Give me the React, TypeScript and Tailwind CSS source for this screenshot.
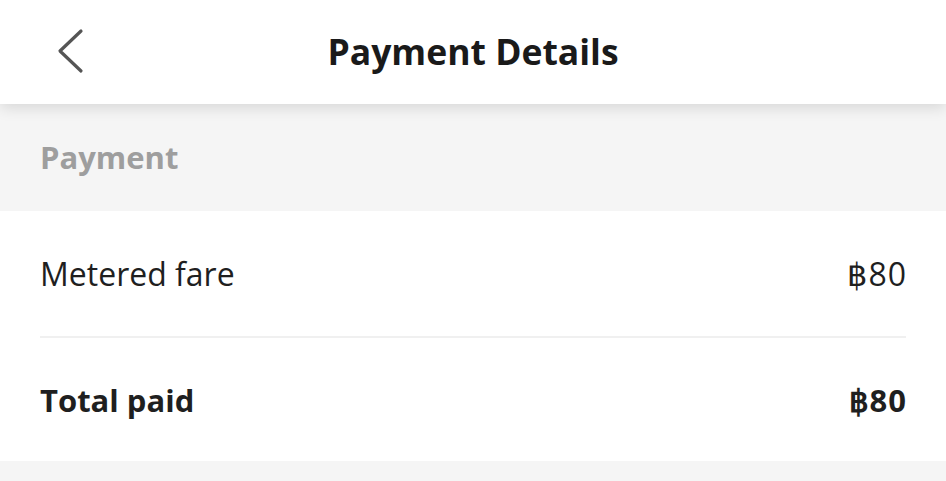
import React from "react";

const font = { fontFamily: '"Open Sans", "Noto Sans", sans-serif' };

function Row({ label, amount, bold }: { label: string; amount: string; bold?: boolean }) {
  return (
    <div
      className={`flex items-center justify-between h-[125px] text-[#1f1f1f] ${
        bold ? "font-bold text-[31px]" : "font-normal text-[32px]"
      }`}
    >
      <span>{label}</span>
      <span className="tracking-[1px] -mr-[1px]">{amount}</span>
    </div>
  );
}

export default function App() {
  return (
    <div className="w-[946px] h-[481px] bg-[#f5f5f5] overflow-hidden" style={font}>
      <div className="relative z-10 h-[104px] bg-white flex items-center justify-center shadow-[0_4px_14px_rgba(0,0,0,0.12)]">
        <button className="absolute left-[50px] top-[26px] w-[40px] h-[50px] flex items-center justify-center">
          <svg width="30" height="46" viewBox="0 0 30 46" fill="none">
            <path d="M26 3 L5 23 L26 43" stroke="#555555" strokeWidth="3.2" strokeLinecap="round" strokeLinejoin="round" />
          </svg>
        </button>
        <h1 className="text-[35.5px] font-bold text-[#1a1a1a] tracking-[0px]">Payment Details</h1>
      </div>

      <div className="h-[107px] bg-[#f5f5f5] flex items-center px-[40px]">
        <span className="text-[31px] font-bold text-[#9e9e9e]">Payment</span>
      </div>

      <div className="bg-white px-[40px] h-[250px]">
        <Row label="Metered fare" amount="฿80" />
        <div className="h-[2px] bg-[#f0f0f0]" />
        <Row label="Total paid" amount="฿80" bold />
      </div>
    </div>
  );
}
